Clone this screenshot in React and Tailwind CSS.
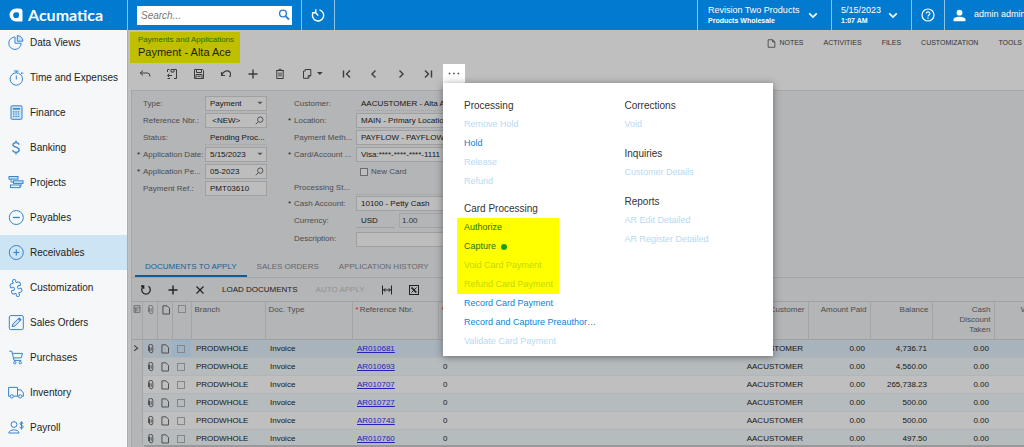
import React from "react";
import { Puzzle } from "lucide-react";

function Icon({ d, size = "size-3", width = 1, children }) {
  return (
    <svg viewBox="0 0 12 12" className={size + " shrink-0"} fill="none" stroke="currentColor" strokeWidth={width} aria-hidden="true">
      {d && <path d={d} />}
      {children}
    </svg>
  );
}

function SideIcon({ children }) {
  return (
    <svg viewBox="0 0 16 16" className="size-4 shrink-0" fill="none" stroke="currentColor" strokeWidth="1" aria-hidden="true">
      {children}
    </svg>
  );
}

const modules = [
  ["Data Views", <SideIcon><path d="M7 2A6.2 6.2 0 1 0 13.2 8.2H7Z" /><path d="M9.3 0.6A5.6 5.6 0 0 1 14.9 6.2H9.3Z" fill="#cfe3f5" /></SideIcon>],
  ["Time and Expenses", <SideIcon><circle cx="8.3" cy="9" r="6.2" /><path d="M8.3 2.8V1M6 1H10.6M8.3 5.5V9.5M12.7 4.5L14.2 3M13.3 1.9L15.2 3.8" /></SideIcon>],
  ["Finance", <SideIcon><rect x="3" y="0.8" width="11" height="13.5" rx="1" fill="#cfe3f5" /><path d="M5 3.8H12" strokeWidth="1.6" /><path d="M5 6.8H12M5 9H12M5 11.3H12" strokeDasharray="1.4 1" strokeWidth="1.2" /></SideIcon>],
  ["Banking", <SideIcon><path d="M11 4.8C11 1.8 5 1.8 5 4.8C5 7.8 11.2 6.6 11.2 10C11.2 13.2 4.8 13.2 4.8 10M8 0.6V2.6M8 12.4V14.4" strokeWidth="1.3" /></SideIcon>],
  ["Projects", <SideIcon><rect x="1" y="1.5" width="9" height="2.6" fill="#cfe3f5" /><rect x="5.5" y="5.8" width="9.5" height="2.6" fill="#cfe3f5" /><rect x="2.5" y="10" width="9.5" height="2.6" /><path d="M3 4.2V7H5.5M13 8.5V11.3H12" /></SideIcon>],
  ["Payables", <SideIcon><circle cx="8.3" cy="7.5" r="7" /><path d="M4.8 7.5H11.8" strokeWidth="1.3" /></SideIcon>],
  ["Receivables", <SideIcon><circle cx="8.3" cy="7.5" r="7" /><path d="M5.3 7.5H11.3M8.3 4.5V10.5" strokeWidth="1.2" /></SideIcon>],
  ["Customization", <Puzzle className="size-4 shrink-0 rotate-[-60deg]" strokeWidth={1.4} />],
  ["Sales Orders", <SideIcon><rect x="1.3" y="0.6" width="14" height="14" rx="1.5" /><path d="M4.2 11.7L4.9 9L11 2.9L13 4.9L6.9 11Z" fill="#cfe3f5" /><path d="M10.7 3.2L12.7 5.2" strokeWidth="2" /></SideIcon>],
  ["Purchases", <SideIcon><path d="M1.3 1.2H3.8L6.1 10.4H13.3M4.3 3.4H14.6L13.1 7.9H5.5" /><circle cx="6.8" cy="12.7" r="1.2" /><circle cx="12.3" cy="12.7" r="1.2" /></SideIcon>],
  ["Inventory", <SideIcon><path d="M2 11.2H0.6V2.4H9.5V11.2H5.5M9.5 4.9H13L15.4 8V11.2H14M10.5 11.2H9.5" /><circle cx="3.8" cy="11.4" r="1.6" /><circle cx="12.2" cy="11.4" r="1.6" /></SideIcon>],
  ["Payroll", <SideIcon><circle cx="6" cy="4.5" r="2.9" /><path d="M0.8 13C0.8 8.9 11 8.9 11 13Z" /><path d="M15 3.8C15 1.9 12 1.9 12 3.8C12 5.5 15.2 4.9 15.2 6.8C15.2 8.8 11.8 8.8 11.8 6.8M13.5 1.3V9.5" /></SideIcon>],
];

function Header() {
  const chevron = <Icon size="size-[10px]" width={2} d="M1.5 4L6 8.5L10.5 4" />;
  return (
    <header className="flex h-[30px] shrink-0 overflow-hidden bg-[#027acf] text-white">
      <a href="#home" className="flex w-[127px] shrink-0 items-center gap-[5px] pl-[9px]">
        <svg viewBox="0 0 14 14" className="size-[14px]" aria-hidden="true">
          <path fillRule="evenodd" fill="currentColor" d="M7 0.5H10.5A3 3 0 0 1 13.5 3.5V13.5H7A6.5 6.5 0 0 1 7 0.5ZM7.2 4.3A2.9 2.9 0 1 0 10 7.2V6A1.7 1.7 0 0 0 8.3 4.3Z" />
        </svg>
        <span className="font-[Lato,sans-serif] text-[16px] leading-5 font-bold">Acumatica</span>
      </a>
      <div className="flex shrink-0 items-center border-l border-[#8fc4ea] px-[9px]">
        <form className="flex h-[19px] w-[155px] items-center bg-white pr-[2px] pl-1">
          <input type="search" aria-label="Search" placeholder="Search..." className="min-w-0 flex-1 text-[10px] text-gray-700 italic outline-none placeholder:text-[#777777]" />
          <button type="button" aria-label="Run search" className="text-[#2f7fcf]">
            <Icon width={1.4}><circle cx="5" cy="4.5" r="3.4" /><path d="M7.3 6.8L11 10.5" strokeWidth="1.8" /></Icon>
          </button>
        </form>
      </div>
      <button aria-label="Recent" className="flex w-[34px] shrink-0 items-center justify-center border-x border-[#8fc4ea]">
        <svg viewBox="0 0 14 14" className="size-[14px]" fill="none" stroke="currentColor" strokeWidth="1.4" aria-hidden="true">
          <path d="M8.5 1.9A5.6 5.6 0 1 1 2.2 4.5M4.3 4.3L7.3 7.6M0.9 4.7L4.6 4.7L4.9 1.3" />
        </svg>
      </button>
      <div className="ml-auto flex shrink-0 text-[9px]">
        <button className="flex w-[134px] items-center justify-between border-l border-[#8fc4ea] pr-[13px] pl-[10px] text-left">
          <span>
            <span className="block leading-[11px]">Revision Two Products</span>
            <span className="block text-[7px] leading-[10px] font-bold">Products Wholesale</span>
          </span>
          {chevron}
        </button>
        <button className="flex w-20 items-center justify-between border-l border-[#8fc4ea] pr-[13px] pl-[9px] text-left">
          <span>
            <span className="block leading-[11px]">5/15/2023</span>
            <span className="block text-[7px] leading-[10px] font-bold">1:07 AM</span>
          </span>
          {chevron}
        </button>
        <button aria-label="Help" className="flex w-[33px] items-center justify-center border-l border-[#8fc4ea]">
          <svg viewBox="0 0 14 14" className="size-[14px]" fill="none" stroke="currentColor" strokeWidth="1.2" aria-hidden="true">
            <circle cx="7" cy="7" r="6" /><path d="M5.2 5.6C5.2 3.4 8.9 3.4 8.9 5.6C8.9 7 7 7 7 8.4M7 9.4V10.7" />
          </svg>
        </button>
        <button className="flex w-20 items-center gap-2 overflow-hidden border-l border-[#8fc4ea] pl-2 whitespace-nowrap">
          <svg viewBox="0 0 12 12" className="size-[13px] shrink-0" fill="currentColor" aria-hidden="true">
            <circle cx="6" cy="3.4" r="2.7" /><path d="M0.5 11.3V9.8C0.5 6.4 11.5 6.4 11.5 9.8V11.3Z" />
          </svg>
          <span>admin admin</span>
        </button>
      </div>
    </header>
  );
}

function Sidebar() {
  return (
    <nav className="w-[127px] shrink-0 overflow-hidden bg-[#f5f7f9]">
      <ul className="-mt-[5px]">
        {modules.map(([name, icon]) => (
          <li key={name}>
            <a
              href="#module"
              className={
                "flex h-[35px] items-center gap-[6px] pl-2 text-[10px] whitespace-nowrap text-[#222222] " +
                (name === "Receivables" ? "bg-[#cde4f4]" : "")
              }
            >
              <span className="text-[#3484d0]">{icon}</span>
              {name}
            </a>
          </li>
        ))}
      </ul>
    </nav>
  );
}

function MenuGroup({ title, items }) {
  return (
    <section>
      <h2 className="text-[10px] leading-[18px] text-[#333333]">{title}</h2>
      <ul>
        {items.map(([name, state, marked]) => (
          <li key={name} className={"flex h-[19px] items-center " + (marked ? "-ml-[7px] w-[102px] bg-[#ffff00] pl-[7px]" : "")}>
            <button
              disabled={state === "off"}
              className={
                "flex items-center gap-[5px] text-[9px] whitespace-nowrap " +
                (state === "off" ? (marked ? "text-[#c3d800]" : "text-[#b5daf4]") : marked ? "text-[#1d7500]" : "text-[#0f7fd0]")
              }
            >
              {name}
              {name === "Capture" && <span className="size-[6px] rounded-full bg-[#16a016]" />}
            </button>
          </li>
        ))}
      </ul>
    </section>
  );
}

function ActionMenu() {
  return (
    <div className="absolute top-full left-0 z-10 grid w-[330px] grid-cols-2 bg-white pt-[14px] pb-[5px] pl-[21px] shadow-[0_1px_8px_rgba(0,0,0,0.4)]">
      <div className="flex flex-col gap-[9px]">
        <MenuGroup title="Processing" items={[["Remove Hold", "off"], ["Hold", "on"], ["Release", "off"], ["Refund", "off"]]} />
        <MenuGroup
          title="Card Processing"
          items={[
            ["Authorize", "on", true],
            ["Capture", "on", true],
            ["Void Card Payment", "off", true],
            ["Refund Card Payment", "off", true],
            ["Record Card Payment", "on"],
            ["Record and Capture Preauthor…", "on"],
            ["Validate Card Payment", "off"],
          ]}
        />
      </div>
      <div className="flex flex-col gap-[11px] pl-[6px]">
        <MenuGroup title="Corrections" items={[["Void", "off"]]} />
        <MenuGroup title="Inquiries" items={[["Customer Details", "off"]]} />
        <MenuGroup title="Reports" items={[["AR Edit Detailed", "off"], ["AR Register Detailed", "off"]]} />
      </div>
    </div>
  );
}

function ToolButton({ label, children }) {
  return (
    <button aria-label={label} className="flex w-[27px] items-center justify-center">
      {children}
    </button>
  );
}

function Toolbar() {
  return (
    <div className="mt-px mb-[7px] flex h-[19px] text-[#3c3c3c]">
      <ToolButton label="Back"><Icon d="M4 2.5L1.2 5L4 7.5M1.2 5H8.5Q11 5 11 8.5" /></ToolButton>
      <ToolButton label="Save and close"><Icon d="M1.5 4V1.5H3.5M5 1.5H10.5V10.5H8M5 1.5V4H8V1.5M6 7.5H1.5M3.3 5.7L1.5 7.5L3.3 9.3M1.5 10.5H4" /></ToolButton>
      <ToolButton label="Save"><Icon d="M1.5 1.5H9.5L10.5 2.5V10.5H1.5ZM3.5 1.5V4.5H8.5V1.5M3 10.5V6.5H9V10.5M4.3 8.3H7.7" /></ToolButton>
      <ToolButton label="Undo"><Icon width={1.1} d="M1.5 4V7.5H5M1.7 7.3C4 2 9.5 1.5 10.5 5.5C10.8 7 10.5 8 9.5 9" /></ToolButton>
      <ToolButton label="Add"><Icon width={1.4} d="M6 1.5V10.5M1.5 6H10.5" /></ToolButton>
      <ToolButton label="Delete"><Icon d="M2 2.5H10M2.8 2.5V10.5H9.2V2.5M5 4.5V8.5M7 4.5V8.5M4.5 1.3H7.5" /></ToolButton>
      <button aria-label="Clipboard" className="flex w-10 items-center gap-[3px] pl-2">
        <Icon d="M4.2 1.5H9.8V7.5L7.3 10.3H2.5V3H4.2V1.5M9.8 7.5H7.3V10.3" />
        <Icon size="size-2"><path d="M1.5 3H10L5.8 7.5Z" fill="currentColor" stroke="none" /></Icon>
      </button>
      <ToolButton label="First"><Icon width={1.4} d="M2.5 2.5V9.5M9 2.5L5.5 6L9 9.5" /></ToolButton>
      <ToolButton label="Previous"><Icon width={1.4} d="M7.5 2.5L4 6L7.5 9.5" /></ToolButton>
      <ToolButton label="Next"><Icon width={1.4} d="M4.5 2.5L8 6L4.5 9.5" /></ToolButton>
      <ToolButton label="Last"><Icon width={1.4} d="M9.5 2.5V9.5M3 2.5L6.5 6L3 9.5" /></ToolButton>
      <div className="relative ml-[2px] flex">
        <button aria-label="More actions" aria-expanded="true" className="flex w-[22px] items-center justify-center bg-white">
          <Icon><path d="M0.8 5.5H2.3M5.2 5.5H6.7M9.6 5.5H11.1" strokeWidth="1.5" /></Icon>
        </button>
        <ActionMenu />
      </div>
    </div>
  );
}

const caret = <Icon size="size-2"><path d="M2 2.5H10L6 6.5Z" fill="#555557" stroke="none" /></Icon>;
const lens = <Icon size="size-[9px]" width={1.2}><circle cx="7" cy="4.8" r="3.6" stroke="#48484a" /><path d="M4.5 7.5L1 11" stroke="#48484a" /></Icon>;

function Field({ id, label, required, kind = "input", value, wide, short }) {
  const size = wide ? "w-[110px]" : "w-[62px]";
  const box = "flex h-[15px] items-center border border-[#9fa0a2] bg-[#bdbdbe] pl-1 pr-[2px] " + size;
  return (
    <div className={"flex items-center " + (short || "h-[17px]")}>
      <label htmlFor={id} className="flex w-[68px] truncate text-[#4c4c4e]">
        <span className="w-[6px] shrink-0 text-[#222222]">{required ? "*" : ""}</span>
        <span>{label}</span>
      </label>
      {kind === "text" && <output id={id} className={"h-[14px] border-b border-dotted border-[#a0a1a3] pl-[5px] leading-[14px] " + size}>{value}</output>}
      {kind === "select" && (
        <span className={box}>
          <select id={id} className="min-w-0 flex-1 appearance-none outline-none"><option>{value}</option></select>
          {caret}
        </span>
      )}
      {(kind === "input" || kind === "lookup") && (
        <span className={box}>
          <input id={id} defaultValue={value} className="min-w-0 flex-1 outline-none" />
          {kind === "lookup" && lens}
        </span>
      )}
    </div>
  );
}

function PaymentForm() {
  return (
    <form className="flex gap-[21px] pt-1 pl-[5px]">
      <div>
        <Field id="type" label="Type:" kind="select" value="Payment" />
        <Field id="ref" label="Reference Nbr.:" kind="lookup" value=" <NEW>" />
        <Field id="status" label="Status:" kind="text" value="Pending Proc..." />
        <Field id="date" label="Application Date:" required kind="select" value="5/15/2023" />
        <Field id="period" label="Application Pe..." required kind="lookup" value="05-2023" />
        <Field id="payref" label="Payment Ref.:" value="PMT03610" />
      </div>
      <div className="whitespace-nowrap">
        <Field id="customer" label="Customer:" kind="text" value="AACUSTOMER - Alta Ace" wide />
        <Field id="location" label="Location:" required value="MAIN - Primary Location" wide />
        <Field id="method" label="Payment Meth..." value="PAYFLOW - PAYFLOW" wide />
        <Field id="card" label="Card/Account ..." required value="Visa:****-****-****-1111" wide />
        <div className="flex h-[17px] items-center pl-[72px] text-[#4c4c4e]">
          <label className="flex items-center gap-[3px]">
            <input type="checkbox" className="size-2 appearance-none border border-[#6c6c6e] bg-[#bdbdbe]" />
            New Card
          </label>
        </div>
        <Field id="pstatus" label="Processing St..." kind="text" value="" wide short="h-[15px]" />
        <Field id="cash" label="Cash Account:" required value="10100 - Petty Cash" wide />
        <div className="flex h-[17px] items-center">
          <label htmlFor="currency" className="w-[68px] pl-[6px] text-[#4c4c4e]">Currency:</label>
          <output id="currency" className="mr-1 h-[14px] w-[39px] border-b border-[#a0a1a3] pl-[5px] leading-[14px]">USD</output>
          <input aria-label="Rate" defaultValue="1.00" className="h-[15px] w-[67px] border border-[#a4a5a7] pl-[2px] text-[#333333] outline-none" />
        </div>
        <Field id="desc" label="Description:" value="" wide short="h-5" />
      </div>
    </form>
  );
}

const docs = [
  ["AR010681", "4,736.71"],
  ["AR010693", "4,560.00"],
  ["AR010707", "265,738.23"],
  ["AR010727", "500.00"],
  ["AR010743", "500.00"],
  ["AR010760", "497.50"],
];

const clip = <Icon size="size-[10px]" width={1.2} d="M4.2 3V8.5A1.8 1.8 0 0 0 8.2 8.5V3A2.6 2.6 0 0 0 3 3V8.5M6.2 4V8" />;
const page = <Icon size="size-[10px]" width={1.2} d="M2.3 1H7.3L10.2 4V10.8H2.3Z" />;
const tick = "block size-2 appearance-none border border-[#85868a]";

function Grid() {
  const th = "border-r border-[#a3a4a6] px-[3px] pt-[3px] align-top leading-[10px] font-normal text-[#4c4c4e]";
  return (
    <div className="min-h-0 flex-1 overflow-hidden">
      <table className="w-[924px] table-fixed border-collapse">
        <colgroup>
          <col className="w-[10px]" />
          <col className="w-[15px]" />
          <col className="w-[15px]" />
          <col className="w-[19px]" />
          <col className="w-[74px]" />
          <col className="w-[87px]" />
          <col className="w-[86px]" />
          <col className="w-[284px]" />
          <col className="w-[86px]" />
          <col className="w-[62px]" />
          <col className="w-[62px]" />
          <col className="w-[62px]" />
          <col className="w-[62px]" />
        </colgroup>
        <thead>
          <tr className="h-[38px] border-y border-[#a0a1a3] text-left">
            <th aria-label="Settings" className={th + " px-px text-[#666668]"}><Icon size="size-2" width={1.3} d="M1.5 1H10.5V11H1.5ZM1.5 4.5H10.5M4 4.5V11M4 7.5H8" /></th>
            <th aria-label="Files" className={th + " px-[2px] text-[#77777a]"}>{clip}</th>
            <th aria-label="Notes" className={th + " px-[2px]"}>{page}</th>
            <th className={th + " px-[5px]"}><input type="checkbox" aria-label="Select all" className={tick} /></th>
            <th className={th}>Branch</th>
            <th className={th}>Doc. Type</th>
            <th className={th}><span className="mr-px text-[#cc2200]">*</span>Reference Nbr.</th>
            <th className={th + " text-[#cc2200]"}>*</th>
            <th className={th + " text-right"}>Customer</th>
            <th className={th + " text-right"}>Amount Paid</th>
            <th className={th + " text-right"}>Balance</th>
            <th className={th + " text-right"}>Cash<br />Discount<br />Taken</th>
            <th className={th + " text-right"}>Write-Off</th>
          </tr>
        </thead>
        <tbody>
          {docs.map(([ref, balance], i) => (
            <tr key={ref} className={"h-[18px] border-b border-[#b1b5b7] " + (i === 0 ? "bg-[#a9b3bc]" : i % 2 ? "bg-[#b6bcbd]" : "bg-[#bfbfbf]")}>
              <td className="border-r border-[#a3a4a6] bg-[#b4b5b7] text-[#444446]">{i === 0 && <Icon size="size-[9px]" width={1.5} d="M3 2L7.5 5.5L3 9" />}</td>
              <td className="pl-[3px] text-[#505052]">{clip}</td>
              <td className="pl-[3px] text-[#505052]">{page}</td>
              <td className={"pl-[5px] " + (i === 0 ? "bg-[#9db3c3]" : "")}><input type="checkbox" aria-label={"Select " + ref} className={tick} /></td>
              <td className="pl-[5px]">PRODWHOLE</td>
              <td className="pl-[5px]">Invoice</td>
              <td className="pl-[5px]"><a href="#doc" className="text-[#2222b8] underline">{ref}</a></td>
              <td className="pl-[5px]">{i > 0 && "0"}</td>
              <td className="pr-[5px] text-right">AACUSTOMER</td>
              <td className="pr-[5px] text-right">0.00</td>
              <td className="pr-[5px] text-right">{balance}</td>
              <td className="pr-[5px] text-right">0.00</td>
              <td />
            </tr>
          ))}
        </tbody>
      </table>
    </div>
  );
}

export default function App() {
  return (
    <div className="flex h-screen flex-col overflow-hidden font-['Liberation_Sans',Arial,sans-serif] text-[8px] text-[#161616]">
      <Header />
      <div className="flex min-h-0 flex-1">
        <Sidebar />
        <main className="flex min-w-0 flex-1 flex-col border-l border-[#adadad] bg-[#bfbfbf] pt-[2px] pl-[3px]">
          <div className="flex items-start justify-between">
            <div className="-ml-px h-[31px] w-[110px] bg-[#bfbf00] pt-[3px] pl-2 whitespace-nowrap">
              <a href="#list" className="block leading-[10px] text-[#2c6a00]">Payments and Applications</a>
              <h1 className="text-[11px] leading-[15px] text-[#1e1e00]">Payment - Alta Ace</h1>
            </div>
            <nav className="mr-[2px] flex gap-5 pt-[6px] text-[7px] leading-[10px] text-[#333333]">
              <a href="#notes" className="flex items-center gap-[3px]">
                <Icon size="size-[9px]" d="M1.5 1H7.5L10.5 4V11H1.5ZM7.5 1V4H10.5" />
                NOTES
              </a>
              <a href="#activities">ACTIVITIES</a>
              <a href="#files">FILES</a>
              <a href="#customization">CUSTOMIZATION</a>
              <a href="#tools">TOOLS</a>
            </nav>
          </div>
          <Toolbar />
          <div className="flex min-h-0 flex-1 flex-col border-t border-l border-[#a6a7a9] bg-[#b4b5b7]">
            <PaymentForm />
            <div role="tablist" className="mt-[7px] flex h-[22px] shrink-0 border-b border-[#a3a4a6] pl-[3px] text-[#66676a]">
              <button role="tab" aria-selected="true" className="border-b-2 border-[#0f5c99] px-[10px] pt-[2px] text-[#165f9c]">DOCUMENTS TO APPLY</button>
              <button role="tab" className="px-[10px]">SALES ORDERS</button>
              <button role="tab" className="px-[10px]">APPLICATION HISTORY</button>
            </div>
            <div className="flex h-[23px] shrink-0 items-center text-[#222222]">
              <ToolButton label="Refresh"><Icon width={1.3} d="M3.5 2.3A4.3 4.3 0 1 0 8.5 2.3M3.7 4.8V2H1" /></ToolButton>
              <ToolButton label="Add row"><Icon width={1.4} d="M6 1.5V10.5M1.5 6H10.5" /></ToolButton>
              <ToolButton label="Delete row"><Icon width={1.2} d="M2.5 2.5L9.5 9.5M9.5 2.5L2.5 9.5" /></ToolButton>
              <button className="px-[9px]">LOAD DOCUMENTS</button>
              <button disabled className="px-[9px] text-[#919294]">AUTO APPLY</button>
              <ToolButton label="Fit to screen"><Icon d="M1.5 1.5V10.5M10.5 1.5V10.5M2.5 6H9.5M4.3 4.3L2.6 6L4.3 7.7M7.7 4.3L9.4 6L7.7 7.7" /></ToolButton>
              <ToolButton label="Export to Excel"><Icon><rect x="1.5" y="1.5" width="9" height="9" /><path d="M3.5 3.5L8.3 8.5" strokeWidth="1.8" /><path d="M8.5 3.5L3.5 8.5" /></Icon></ToolButton>
            </div>
            <Grid />
            <div className="ml-3 h-[2px] shrink-0 bg-[#98999b]" />
          </div>
        </main>
      </div>
    </div>
  );
}
